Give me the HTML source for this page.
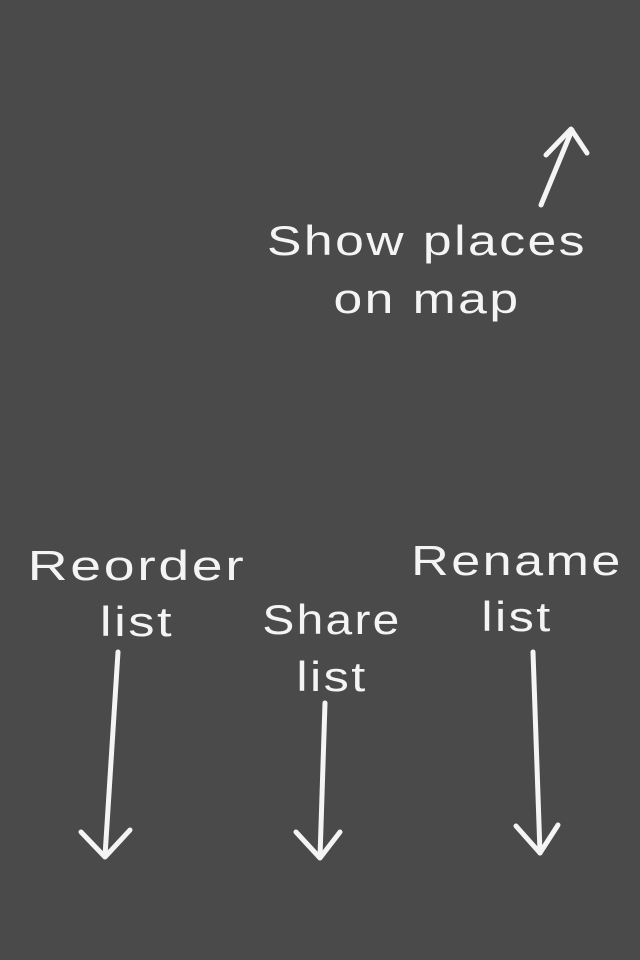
<!DOCTYPE html>
<html><head><style>
html,body{margin:0;padding:0;}
body{width:640px;height:960px;background:#4a4a4a;position:relative;overflow:hidden;font-family:"Liberation Sans",sans-serif;color:#f4f4f4;}
.t{position:absolute;font-size:42px;line-height:1;white-space:nowrap;text-align:center;transform-origin:center;letter-spacing:2px;}
svg{position:absolute;left:0;top:0;}
</style></head><body>
<div class="t" style="left:227px;width:400px;top:220px;transform:scaleX(1.23);">Show places</div>
<div class="t" style="left:227px;width:400px;top:278px;transform:scaleX(1.23);">on map</div>
<div class="t" style="left:0;width:274px;top:545px;transform:scaleX(1.32);">Reorder</div>
<div class="t" style="left:0;width:274px;top:601px;transform:scaleX(1.25);">list</div>
<div class="t" style="left:232px;width:200px;top:599px;transform:scaleX(1.14);">Share</div>
<div class="t" style="left:232px;width:200px;top:656px;transform:scaleX(1.2);">list</div>
<div class="t" style="left:407px;width:220px;top:540px;transform:scaleX(1.24);">Rename</div>
<div class="t" style="left:407px;width:220px;top:596px;transform:scaleX(1.2);">list</div>
<svg width="640" height="960" fill="none" stroke="#f4f4f4" stroke-width="5" stroke-linecap="round" stroke-linejoin="round">
<path d="M541 205 L572 130"/><path d="M546 155 L571 129 L587 153"/>
<path d="M118 652 L105 856"/><path d="M81 832 L105 857 L130 830"/>
<path d="M325 703 L320 857"/><path d="M296 832 L320 858 L340 832"/>
<path d="M533 652 L540 853"/><path d="M516 826 L540 853 L558 825"/>
</svg>
</body></html>
